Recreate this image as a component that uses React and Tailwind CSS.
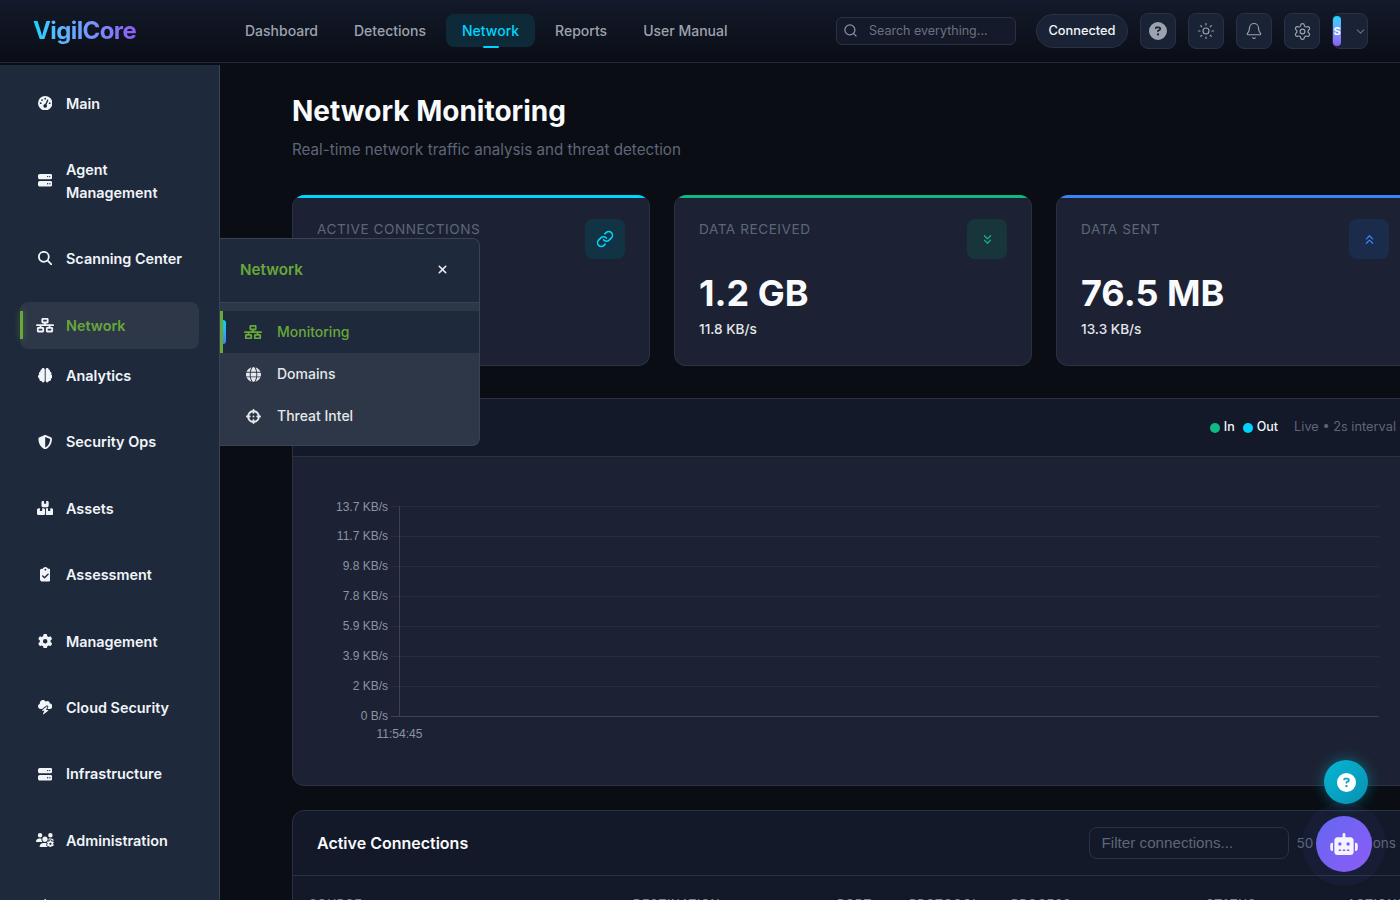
import React from "react";
import { Search, Sun, Bell, Settings, ChevronDown, Link, ChevronsDown, ChevronsUp } from "lucide-react";
import {
  FaGaugeHigh, FaServer, FaMagnifyingGlass, FaNetworkWired, FaBrain, FaShieldHalved, FaBoxesStacked,
  FaClipboardCheck, FaGear, FaUsersGear, FaGlobe, FaCrosshairs, FaXmark, FaRobot, FaCircleQuestion,
  FaCloudBolt, FaBell,
} from "react-icons/fa6";

const sideItems = [
  { label: "Main", Icon: FaGaugeHigh, iconClass: "h-[14.4px] w-[14.4px]" },
  { label: "Agent Management", Icon: FaServer, tall: true, iconClass: "h-[14.4px] w-[14.4px]" },
  { label: "Scanning Center", Icon: FaMagnifyingGlass, iconClass: "h-[14.4px] w-[14.4px]" },
  { label: "Network", Icon: FaNetworkWired, active: true, iconClass: "h-[14.4px] w-[18px]" },
  { label: "Analytics", Icon: FaBrain, pull: true, iconClass: "h-[14.4px] w-[14.4px]" },
  { label: "Security Ops", Icon: FaShieldHalved, iconClass: "h-[14.4px] w-[14.4px]" },
  { label: "Assets", Icon: FaBoxesStacked, iconClass: "h-[14.4px] w-[16.2px]" },
  { label: "Assessment", Icon: FaClipboardCheck, iconClass: "h-[14.4px] w-[10.8px]" },
  { label: "Management", Icon: FaGear, iconClass: "h-[14.4px] w-[14.4px]" },
  { label: "Cloud Security", Icon: FaCloudBolt, iconClass: "h-[14.4px] w-[14.4px]" },
  { label: "Infrastructure", Icon: FaServer, iconClass: "h-[14.4px] w-[14.4px]" },
  { label: "Administration", Icon: FaUsersGear, iconClass: "h-[14.4px] w-[18px]" },
  { label: "Support", Icon: FaBell, iconClass: "h-[14.4px] w-[14.4px]" },
];

function SideItem({ label, Icon, tall, active, pull, iconClass }) {
  return (
    <div
      className={`relative flex items-center shrink-0 rounded-lg pl-4 pr-4 w-[179px] ${tall ? "h-[68.6px]" : "h-[46.4px]"} ${pull ? "-mt-[16.5px]" : ""} ${active ? "mt-px bg-[#2d3748] text-[#68a83a]" : "text-[#f1f5f9]"}`}
    >
      {active && <span className="absolute left-0 top-[9px] w-[3px] h-7 bg-[#68a83a] shadow-[0_0_6px_rgba(104,168,58,0.5)]" />}
      <span className={`w-[18px] flex justify-center shrink-0 ${active ? "text-[#f1f5f9]" : ""}`}>
        <Icon className={`${iconClass} shrink-0`} />
      </span>
      <span className="ml-3 text-[14.4px] leading-[23px] font-semibold">{label}</span>
    </div>
  );
}

function NavLink({ children, active }) {
  return (
    <div className={`relative px-4 h-[33px] flex items-center rounded-lg text-[14px] font-medium ${active ? "bg-[#0e2a38] text-[#00d4ff]" : "text-[#9ca3af]"}`}>
      {children}
      {active && <span className="absolute left-1/2 -translate-x-1/2 -bottom-px w-4 h-0.5 rounded bg-[#00d4ff]" />}
    </div>
  );
}

function IconBtn({ children }) {
  return (
    <div className="w-9 h-9 rounded-lg bg-[#1a2235] border border-[#2a3142] flex items-center justify-center text-[#9ca3af]">
      {children}
    </div>
  );
}

function StatCard({ label, value, sub, bar, box, color, Icon, iconSize }) {
  return (
    <div className="relative h-[171px] rounded-xl bg-[#1c2233] border border-t-0 border-[#2a3142] px-6 pt-[24px] overflow-hidden">
      <span className={`absolute left-0 right-0 top-0 h-[3px] ${bar}`} />
      <div className="text-[13.6px] leading-5 tracking-[0.55px] text-[#5d6678] uppercase">{label}</div>
      <div className="mt-[32px] text-[36px] leading-[44px] font-bold text-[#f8fafc]">{value}</div>
      <div className="mt-[4px] text-[13.6px] leading-5 font-medium text-[#e5e7eb]">{sub}</div>
      <div className={`absolute top-[24px] right-6 w-10 h-10 rounded-lg flex items-center justify-center ${box} ${color}`}>
        <Icon size={iconSize} />
      </div>
    </div>
  );
}

function SideMenuRow({ label, Icon, active, iconClass }) {
  return (
    <div className={`relative h-[42px] flex items-center border-l-[3px] ${active ? "bg-[#1e293b] border-[#68a83a] text-[#68a83a]" : "border-transparent text-[#e5e7eb]"}`}>
      {active && <span className="absolute left-0 top-[9px] w-[3px] h-6 rounded-r-sm bg-gradient-to-b from-[#00d4ff] to-[#3b82f6]" />}
      <span className="w-[18px] ml-[21px] flex justify-center">
        <Icon className={`${iconClass} shrink-0`} />
      </span>
      <span className="ml-[15px] pb-[2px] text-[14px] font-medium">{label}</span>
    </div>
  );
}

const ticks = [
  ["13.7 KB/s", 507, 4], ["11.7 KB/s", 537, 3], ["9.8 KB/s", 567, 3], ["7.8 KB/s", 597, 3],
  ["5.9 KB/s", 627, 3], ["3.9 KB/s", 657, 3], ["2 KB/s", 687, 3], ["0 B/s", 717, 3],
];

function Chart() {
  return (
    <svg width="1122" height="328" className="block" style={{ fontFamily: "'Liberation Sans', Arial, sans-serif" }}>
      {ticks.map(([t, y, d]) => {
        const yy = y - 457 - 0.5;
        return (
          <g key={t}>
            <line x1="98" x2="1086" y1={yy} y2={yy} stroke={t === "0 B/s" ? "#3a4254" : "#272d3f"} />
            <text x="95" y={yy + d} textAnchor="end" fontSize="12" fill="#8b93a3">{t}</text>
          </g>
        );
      })}
      <line x1="106.5" x2="106.5" y1="49" y2="260" stroke="#3a4254" />
      <text x="106.5" y="281" textAnchor="middle" fontSize="12" fill="#8b93a3">11:54:45</text>
    </svg>
  );
}

export default function App() {
  return (
    <div className="relative w-[1400px] h-[900px] overflow-hidden bg-[#0a0d14] font-['Inter',sans-serif]">
      <header className="h-[63px] flex items-center border-b border-[#262b3a] bg-gradient-to-b from-[#141a2b] to-[#0a0d15]">
        <div className="w-[229px] pl-[33px] shrink-0">
          <span className="text-[24px] font-bold tracking-[-0.6px] bg-gradient-to-r from-[#00d4ff] to-[#8b5cf6] bg-clip-text text-transparent">VigilCore</span>
        </div>
        <nav className="flex items-center gap-1 mt-[-2px]">
          <NavLink>Dashboard</NavLink>
          <NavLink>Detections</NavLink>
          <NavLink active>Network</NavLink>
          <NavLink>Reports</NavLink>
          <NavLink>User Manual</NavLink>
        </nav>
        <div className="ml-auto mr-8 flex items-center">
          <div className="w-[180px] h-7 rounded-md border border-[#2a3142] bg-[#141a29] flex items-center pl-[6px] mr-5">
            <Search size={15} className="text-[#8b93a3] -mt-px" />
            <span className="ml-[11px] text-[12.5px] text-[#6b7280]">Search everything...</span>
          </div>
          <div className="h-[34px] w-[92px] rounded-full bg-[#1a2235] border border-[#2a3142] flex items-center justify-center text-[12.8px] font-medium text-[#f1f5f9] mr-3">Connected</div>
          <div className="flex items-center gap-3">
            <IconBtn><FaCircleQuestion size={18} /></IconBtn>
            <IconBtn><Sun size={18} strokeWidth={1.5} /></IconBtn>
            <IconBtn><Bell size={18} strokeWidth={1.5} /></IconBtn>
            <IconBtn><Settings size={19} strokeWidth={1.5} /></IconBtn>
            <div className="w-9 h-9 rounded-lg bg-[#1a2235] border border-[#2a3142] flex items-center text-[#6b7280]">
              <span className="w-2 h-[30px] rounded-full bg-gradient-to-b from-[#00d4ff] to-[#8b5cf6] text-white text-[11px] font-bold flex items-center justify-center overflow-hidden">S</span>
              <ChevronDown size={13} className="ml-auto" />
            </div>
          </div>
        </div>
      </header>

      <div className="flex h-[837px] mt-[2px]">
        <aside className="w-[220px] shrink-0 h-full overflow-hidden bg-[#1e293b] border-r border-[#3a4354] pt-[15px] pl-5 flex flex-col gap-5">
          {sideItems.map((it) => <SideItem key={it.label} {...it} />)}
        </aside>

        <main className="pl-[72px] pt-[29px] w-[1180px] overflow-hidden shrink-0">
          <div className="w-[1122px]">
            <h1 className="text-[28px] leading-[34px] font-bold text-[#f8fafc]">Network Monitoring</h1>
            <p className="mt-[10px] text-[15.2px] leading-6 text-[#5d6678]">Real-time network traffic analysis and threat detection</p>
            <div className="mt-[33px] grid grid-cols-3 gap-6">
              <StatCard label="Active Connections" value="50" sub="Established" bar="bg-[#00d4ff]" box="bg-[#123344]" color="text-[#00d4ff]" Icon={Link} iconSize={18} />
              <StatCard label="Data Received" value="1.2 GB" sub="11.8 KB/s" bar="bg-[#10b981]" box="bg-[#17353a]" color="text-[#10b981]" Icon={ChevronsDown} iconSize={15} />
              <StatCard label="Data Sent" value="76.5 MB" sub="13.3 KB/s" bar="bg-[#3b82f6]" box="bg-[#1b2b4b]" color="text-[#3b82f6]" Icon={ChevronsUp} iconSize={15} />
            </div>

            <section className="mt-8 h-[388px] rounded-xl border border-[#2a3142] bg-[#1c2233] overflow-hidden">
              <div className="h-[58px] bg-[#131929] border-b border-[#2a3142] flex items-center pl-6 pr-[17px]">
                <span className="text-[16px] font-semibold text-[#f8fafc]">Traffic Overview</span>
                <div className="ml-auto -mt-px flex items-center text-[12.5px] font-medium text-[#f1f5f9]">
                  <span className="w-2.5 h-2.5 rounded-full bg-[#10b981] mr-1 mt-px" />In
                  <span className="w-2.5 h-2.5 rounded-full bg-[#00d4ff] ml-2 mr-1 mt-px" />Out
                  <span className="ml-4 text-[12.8px] font-normal text-[#5d6678]">Live • 2s interval</span>
                </div>
              </div>
              <Chart />
            </section>

            <section className="mt-6 h-[200px] rounded-t-xl border border-[#2a3142] bg-[#131929]">
              <div className="h-[65px] border-b border-[#2a3142] flex items-center pl-6 pr-[17px]">
                <span className="text-[16px] font-semibold text-[#f8fafc]">Active Connections</span>
                <div className="ml-auto w-[200px] h-8 rounded-lg border border-[#2a3142] flex items-center pl-3 font-['Liberation_Sans',Arial,sans-serif] text-[15.2px] text-[#5d6678]">Filter connections...</div>
                <span className="ml-2 text-[13.6px] text-[#5d6678]">50 connections</span>
              </div>
              <div className="grid grid-cols-[323px_204px_72px_102px_195px_142px_auto] pl-4 pt-[19px] text-[12px] tracking-[0.05em] text-[#7b8494] uppercase font-medium">
                <span>Source</span>
                <span className="pl-px">Destination</span>
                <span className="pl-px">Port</span>
                <span className="pl-px">Protocol</span>
                <span className="pl-px">Process</span>
                <span className="pl-px">Status</span>
                <span>Actions</span>
              </div>
            </section>
          </div>
        </main>
      </div>

      <div className="absolute left-[220px] top-[238px] w-[260px] h-[208px] bg-[#2d3748] border border-l-0 border-[#3a4354] rounded-r-lg overflow-hidden">
        <div className="h-[64px] bg-[#1e293b] border-b border-[#3a4354] flex items-center pl-5 pr-[30px]">
          <span className="text-[15.2px] font-semibold text-[#68a83a]">Network</span>
          <FaXmark size={13} className="ml-auto -mt-[2px] text-[#e5e7eb]" />
        </div>
        <div className="pt-2">
          <SideMenuRow label="Monitoring" Icon={FaNetworkWired} active iconClass="h-[14.4px] w-[18px]" />
          <SideMenuRow label="Domains" Icon={FaGlobe} iconClass="h-[15px] w-[15px]" />
          <SideMenuRow label="Threat Intel" Icon={FaCrosshairs} iconClass="h-[15px] w-[15px]" />
        </div>
      </div>

      <div className="absolute left-[1324px] top-[760px] w-11 h-11 rounded-full bg-gradient-to-br from-[#06b6d4] to-[#0891b2] shadow-[0_0_14px_rgba(6,182,212,0.45)] flex items-center justify-center text-white">
        <FaCircleQuestion size={19} />
      </div>
      <div className="absolute left-[1316px] top-[816px] w-14 h-14 rounded-full bg-gradient-to-br from-[#6366f1] to-[#8b5cf6] shadow-[0_0_0_14px_rgba(99,102,241,0.06)] flex items-center justify-center text-[#f5f3ff]">
        <FaRobot className="h-[22px] w-[28px]" />
      </div>
    </div>
  );
}
